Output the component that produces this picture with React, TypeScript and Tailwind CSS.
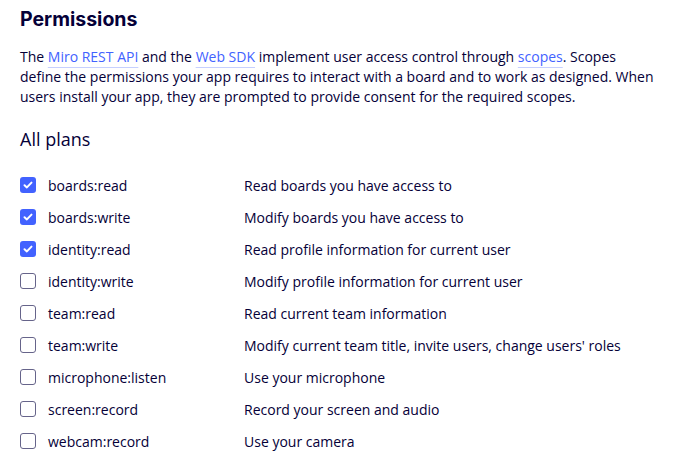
const scopes = [
  { name: 'boards:read', description: 'Read boards you have access to', checked: true },
  { name: 'boards:write', description: 'Modify boards you have access to', checked: true },
  { name: 'identity:read', description: 'Read profile information for current user', checked: true },
  { name: 'identity:write', description: 'Modify profile information for current user', checked: false },
  { name: 'team:read', description: 'Read current team information', checked: false },
  { name: 'team:write', description: "Modify current team title, invite users, change users' roles", checked: false },
  { name: 'microphone:listen', description: 'Use your microphone', checked: false },
  { name: 'screen:record', description: 'Record your screen and audio', checked: false },
  { name: 'webcam:record', description: 'Use your camera', checked: false },
];

function Checkbox({ checked }: { checked: boolean }) {
  if (checked) {
    return (
      <span className="flex h-4 w-4 shrink-0 items-center justify-center rounded-[3px] bg-[#4262ff]">
        <svg width="10" height="8" viewBox="0 0 10 8" fill="none">
          <path d="M1.5 4.2 L3.9 6.4 L8.5 1.6" stroke="white" strokeWidth="2" strokeLinecap="round" strokeLinejoin="round" />
        </svg>
      </span>
    );
  }
  return <span className="h-4 w-4 shrink-0 rounded-[3px] border-[1.5px] border-[#66648a] bg-white" />;
}

function Link({ children }: { children: React.ReactNode }) {
  return (
    <a className="cursor-pointer text-[#4262ff] underline decoration-[#c6d0ff] decoration-1 underline-offset-[5px]">
      {children}
    </a>
  );
}

export default function App() {
  return (
    <div className="min-h-screen bg-white pl-5 pr-2 pt-[7px] text-[#050038] font-['Open_Sans',sans-serif]">
      <h1 className="text-[19.5px] font-bold leading-[24px] font-['Inter',sans-serif]">Permissions</h1>
      <p className="mt-[16px] max-w-[640px] text-[14px] leading-[20px]">
        The <Link>Miro REST API</Link> and the <Link>Web SDK</Link> implement user access control through{' '}
        <Link>scopes</Link>. Scopes define the permissions your app requires to interact with a board and to work as
        designed. When users install your app, they are prompted to provide consent for the required scopes.
      </p>
      <h2 className="mt-[20px] text-[18px] leading-[24px]">All plans</h2>
      <ul className="mt-[18px] flex flex-col">
        {scopes.map((s) => (
          <li key={s.name} className="flex h-8 items-center text-[14px]">
            <Checkbox checked={s.checked} />
            <span className="ml-3 w-[196px]">{s.name}</span>
            <span>{s.description}</span>
          </li>
        ))}
      </ul>
    </div>
  );
}
